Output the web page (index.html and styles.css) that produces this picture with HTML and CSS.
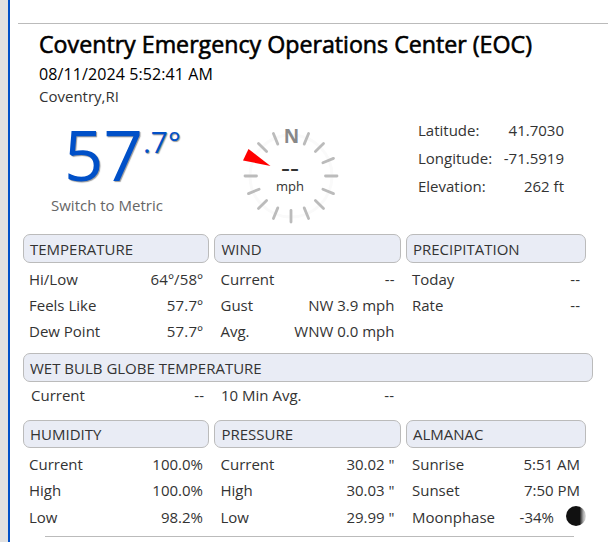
FILE: index.html
```html
<!DOCTYPE html>
<html lang="en">
<head>
    <meta charset="UTF-8">
    <meta name="viewport" content="width=device-width, initial-scale=1.0">
    <title>Coventry Emergency Operations Center (EOC)</title>
    <link rel="stylesheet" href="styles.css">
</head>
<body>
    <div class="station">
        <div class="station-header">
            <h1>Coventry Emergency Operations Center (EOC)</h1>
            <div class="date">08/11/2024 5:52:41 AM</div>
            <div class="location">Coventry,RI</div>
        </div>

        <div class="summary">
            <div class="current-temp">
                <div class="temp"><span class="temp-whole">57</span><span class="temp-decimal">.7°</span></div>
                <a class="switch-units">Switch to Metric</a>
            </div>

            <div class="compass">
                <svg width="100" height="106" viewBox="-50 -56 100 106">
                    <circle class="ring" r="41"/>
                    <g class="ticks">
                        <path d="M0-34.5V-46" transform="rotate(22.5)"/>
                        <path d="M0-34.5V-46" transform="rotate(45)"/>
                        <path d="M0-34.5V-46" transform="rotate(67.5)"/>
                        <path d="M0-34.5V-46" transform="rotate(90)"/>
                        <path d="M0-34.5V-46" transform="rotate(112.5)"/>
                        <path d="M0-34.5V-46" transform="rotate(135)"/>
                        <path d="M0-34.5V-46" transform="rotate(157.5)"/>
                        <path d="M0-34.5V-46" transform="rotate(180)"/>
                        <path d="M0-34.5V-46" transform="rotate(202.5)"/>
                        <path d="M0-34.5V-46" transform="rotate(225)"/>
                        <path d="M0-34.5V-46" transform="rotate(247.5)"/>
                        <path d="M0-34.5V-46" transform="rotate(270)"/>
                        <path d="M0-34.5V-46" transform="rotate(315)"/>
                        <path d="M0-34.5V-46" transform="rotate(337.5)"/>
                    </g>
                    <path class="needle" d="M-42.500-27L-48-15.500L-20.500-10Z"/>
                    <text class="north" x="0.500" y="-33" text-anchor="middle">N</text>
                </svg>
                <div class="wind-label">
                    <div class="wind-speed">--</div>
                    <div class="wind-unit">mph</div>
                </div>
            </div>

            <div class="position">
                <div class="row"><span>Latitude:</span><span>41.7030</span></div>
                <div class="row"><span>Longitude:</span><span>-71.5919</span></div>
                <div class="row"><span>Elevation:</span><span>262 ft</span></div>
            </div>
        </div>

        <div class="panels">
            <div class="panel">
                <h2>TEMPERATURE</h2>
                <div class="row"><span>Hi/Low</span><span class="degrees">64º/58º</span></div>
                <div class="row"><span>Feels Like</span><span class="degrees">57.7º</span></div>
                <div class="row"><span>Dew Point</span><span class="degrees">57.7º</span></div>
            </div>
            <div class="panel panel-middle">
                <h2>WIND</h2>
                <div class="row"><span>Current</span><span>--</span></div>
                <div class="row"><span>Gust</span><span>NW 3.9 mph</span></div>
                <div class="row"><span>Avg.</span><span>WNW 0.0 mph</span></div>
            </div>
            <div class="panel">
                <h2>PRECIPITATION</h2>
                <div class="row"><span>Today</span><span>--</span></div>
                <div class="row"><span>Rate</span><span>--</span></div>
            </div>
        </div>

        <div class="panel panel-wide">
            <h2>WET BULB GLOBE TEMPERATURE</h2>
            <div class="wbgt">
                <div class="row"><span>Current</span><span>--</span></div>
                <div class="row"><span>10 Min Avg.</span><span>--</span></div>
            </div>
        </div>

        <div class="panels panels-bottom">
            <div class="panel">
                <h2>HUMIDITY</h2>
                <div class="row"><span>Current</span><span>100.0%</span></div>
                <div class="row"><span>High</span><span>100.0%</span></div>
                <div class="row row-last"><span>Low</span><span>98.2%</span></div>
            </div>
            <div class="panel panel-middle">
                <h2>PRESSURE</h2>
                <div class="row"><span>Current</span><span>30.02 "</span></div>
                <div class="row"><span>High</span><span>30.03 "</span></div>
                <div class="row row-last"><span>Low</span><span>29.99 "</span></div>
            </div>
            <div class="panel">
                <h2>ALMANAC</h2>
                <div class="row"><span>Sunrise</span><span>5:51 AM</span></div>
                <div class="row"><span>Sunset</span><span>7:50 PM</span></div>
                <div class="row row-last moonphase">
                    <span>Moonphase</span><span class="moon-value">-34%</span>
                    <svg class="moon" width="20" height="20" viewBox="0 0 20 20">
                        <defs>
                            <linearGradient id="moonShade">
                                <stop offset="0" stop-color="#111"/>
                                <stop offset="0.680" stop-color="#111"/>
                                <stop offset="0.860" stop-color="#aaa"/>
                                <stop offset="1" stop-color="#e4e4e4"/>
                            </linearGradient>
                        </defs>
                        <circle cx="10" cy="10" r="10" fill="url(#moonShade)"/>
                    </svg>
                </div>
            </div>
        </div>
        <hr class="bottom-line">
    </div>
</body>
</html>
```
FILE: styles.css
```css
* {
    margin: 0;
    padding: 0;
    box-sizing: border-box;
}

body {
    font-family: "Open Sans", sans-serif;
    font-size: 15px;
    color: #333;
    background: #e1e1e1;
    padding-left: 8px;
    height: 542px;
    overflow: hidden;
}

.station {
    height: 542px;
    background: #fff;
    border-left: 2px solid #0050c8;
    padding: 23px 0 0 8px;
}

.station-header {
    border-top: 1px solid #bbb;
    padding: 5px 0 0 21px;
    height: 94px;
}

h1 {
    font-size: 23.2px;
    font-weight: 500;
    line-height: 30px;
    color: #000;
    -webkit-text-stroke: 0.6px #000;
    white-space: nowrap;
}

.date {
    margin-top: 4px;
    font-size: 16px;
    letter-spacing: 0.1px;
    line-height: 22px;
    color: #000;
}

.location {
    line-height: 22px;
}

.summary {
    display: flex;
    height: 117px;
}

.current-temp {
    width: 223px;
    padding-left: 33px;
}

.temp {
    display: flex;
    height: 77px;
    margin-left: 13px;
    color: #0050c8;
    text-shadow: 1px 1px 1px rgba(0, 0, 0, 0.4);
}

.temp-whole {
    font-size: 69px;
    line-height: 74px;
    font-weight: 500;
}

.temp-decimal {
    font-size: 30px;
    line-height: 50px;
    font-weight: 500;
}

.switch-units {
    display: block;
    line-height: 22px;
    color: #666;
}

.compass {
    position: relative;
    width: 100px;
    height: 106px;
    margin-top: 3px;
}

.compass svg {
    display: block;
}

.ring {
    fill: none;
    stroke: #fafafa;
    stroke-width: 3;
}

.ticks {
    stroke: #bbb;
    stroke-width: 2.8;
    stroke-linecap: round;
}

.needle {
    fill: #f00;
}

.north {
    font-size: 19px;
    font-weight: 700;
    fill: #888;
}

.wind-label {
    position: absolute;
    top: 36px;
    left: 0;
    width: 98px;
    text-align: center;
}

.wind-speed {
    font-size: 28px;
    font-weight: 500;
    line-height: 21px;
    height: 22px;
}

.wind-unit {
    font-size: 13px;
    line-height: 17px;
}

.position {
    width: 146px;
    margin: -1px 0 0 77px;
}

.row {
    display: flex;
    justify-content: space-between;
    line-height: 26px;
    white-space: nowrap;
}

.position .row {
    line-height: 28px;
}

.panels {
    display: flex;
    gap: 5px;
    padding-left: 5px;
    height: 119px;
}

.panel {
    width: 187px;
}

.panel:first-child {
    width: 186px;
}

.panel:last-child {
    width: 180px;
}

.panel h2 {
    height: 29px;
    margin-bottom: 3px;
    padding-left: 6px;
    border: 1px solid #bbb;
    border-radius: 7px;
    background: #e9ecf5;
    font-size: 15px;
    font-weight: 400;
    line-height: 28px;
}

.panels-bottom .panel h2 {
    height: 28px;
    line-height: 26px;
}

.panel .row {
    padding: 0 6px;
}

.panel-middle h2 {
    padding-left: 6.5px;
}

.panel-middle .row {
    padding: 0 6.5px;
}

.panel .row-last {
    line-height: 28px;
}

.degrees {
    letter-spacing: 0.2px;
}

.panel.panel-wide {
    width: 570px;
    height: 67px;
    margin-left: 5px;
}

.panel-wide h2 {
    margin-bottom: 0;
}

.wbgt {
    display: flex;
    gap: 4px;
}

.wbgt .row {
    width: 187px;
    padding: 0 7px;
}

.wbgt .row:first-child {
    padding: 0 6px 0 8px;
}

.panel .moonphase {
    align-items: center;
    padding-right: 0;
}

.moon-value {
    margin-left: auto;
    margin-right: 12px;
}

.moon {
    margin-top: -3px;
}

.bottom-line {
    width: 529px;
    margin: -3px 0 0 27px;
    border: none;
    border-top: 1px solid #bbb;
}
```
